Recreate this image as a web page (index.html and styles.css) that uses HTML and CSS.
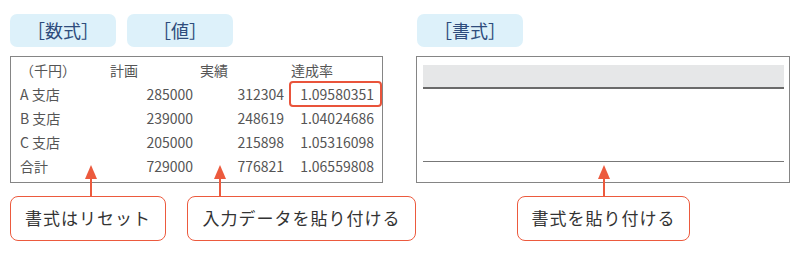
FILE: index.html
```html
<!DOCTYPE html>
<html lang="ja">
<head>
    <meta charset="UTF-8">
    <meta name="viewport" content="width=device-width, initial-scale=1.0">
    <title>貼り付けのオプション</title>
    <link rel="stylesheet" href="styles.css">
</head>
<body>
    <div class="page">
        <div class="column column-left">
            <div class="tags">
                <div class="tag">［数式］</div>
                <div class="tag">［値］</div>
            </div>

            <div class="sheet">
                <div class="grid">
                    <div class="cell label">（千円）</div>
                    <div class="cell head head-plan">計画</div>
                    <div class="cell head head-result">実績</div>
                    <div class="cell rate head">達成率</div>

                    <div class="cell label">A 支店</div>
                    <div class="cell num plan">285000</div>
                    <div class="cell num result">312304</div>
                    <div class="cell num rate marked">1.09580351</div>

                    <div class="cell label">B 支店</div>
                    <div class="cell num plan">239000</div>
                    <div class="cell num result">248619</div>
                    <div class="cell num rate">1.04024686</div>

                    <div class="cell label">C 支店</div>
                    <div class="cell num plan">205000</div>
                    <div class="cell num result">215898</div>
                    <div class="cell num rate">1.05316098</div>

                    <div class="cell label">合計</div>
                    <div class="cell num plan">729000</div>
                    <div class="cell num result">776821</div>
                    <div class="cell num rate">1.06559808</div>
                </div>
            </div>

            <div class="notes">
                <div class="note note-reset">
                    <svg class="arrow" width="12" height="32" viewBox="0 0 12 32"><polygon points="6,0 0,14 12,14"/><rect x="5" y="13" width="2" height="19"/></svg>
                    書式はリセット
                </div>
                <div class="note note-values">
                    <svg class="arrow" width="12" height="32" viewBox="0 0 12 32"><polygon points="6,0 0,14 12,14"/><rect x="5" y="13" width="2" height="19"/></svg>
                    入力データを貼り付ける
                </div>
            </div>
        </div>

        <div class="column column-right">
            <div class="tags">
                <div class="tag">［書式］</div>
            </div>

            <div class="sheet sheet-format">
                <div class="band"></div>
                <div class="rule"></div>
            </div>

            <div class="notes">
                <div class="note note-format">
                    <svg class="arrow" width="12" height="32" viewBox="0 0 12 32"><polygon points="6,0 0,14 12,14"/><rect x="5" y="13" width="2" height="19"/></svg>
                    書式を貼り付ける
                </div>
            </div>
        </div>
    </div>
</body>
</html>
```

FILE: styles.css
```css
* {
    margin: 0;
    padding: 0;
    box-sizing: border-box;
}

body {
    font-family: "Noto Sans CJK JP", "Noto Sans", sans-serif;
    background: #fff;
    color: #333;
}

.page {
    display: flex;
    gap: 33px;
    padding: 14px 10px 0 10px;
}

.column {
    flex-shrink: 0;
}

.column-left {
    width: 373px;
}

.column-right {
    width: 374px;
}

/* tab labels */
.tags {
    display: flex;
    gap: 11px;
    height: 33px;
    margin-bottom: 9px;
}

.column-right .tags {
    padding-left: 1px;
}

.tag {
    width: 106px;
    height: 33px;
    background: #ddf1fa;
    border-radius: 7px;
    color: #2e4c7c;
    font-size: 18px;
    line-height: 33px;
    text-align: center;
}

/* spreadsheet panels */
.sheet {
    height: 127px;
    border: 1px solid #858585;
    padding: 1px 0 4px 0;
}

.grid {
    display: grid;
    grid-template-columns: 95px 88px 95px 93px;
    grid-auto-rows: 24px;
    font-size: 14px;
    color: #555;
}

.cell {
    line-height: 24px;
    white-space: nowrap;
}

.label {
    padding-left: 9px;
}

.head-plan {
    padding-left: 4px;
}

.head-result {
    padding-left: 6px;
}

.num {
    text-align: right;
}

.plan {
    padding-right: 1px;
}

.result {
    padding-right: 5px;
}

.rate {
    border: 2px solid transparent;
    line-height: 20px;
    padding-right: 6px;
}

.rate.head {
    text-align: left;
    padding-left: 0;
}

.rate.marked {
    border-color: #e9543b;
    border-radius: 4px;
    margin: -1px 0;
    line-height: 22px;
}

.sheet-format {
    padding: 8px 5px 0 6px;
}

.band {
    height: 24px;
    background: #e6e7e8;
    border-bottom: 2px solid #6a6a6a;
}

.rule {
    margin-top: 72px;
    height: 0;
    border-top: 1.5px solid #777;
}

/* callouts */
.notes {
    display: flex;
    gap: 21px;
    margin-top: 13px;
}

.note {
    position: relative;
    flex-shrink: 0;
    height: 45px;
    border: 1.5px solid #ec5a3e;
    border-radius: 8px;
    font-size: 17px;
    letter-spacing: 1px;
    line-height: 42px;
    text-align: center;
    color: #333;
    background: #fff;
}

.arrow {
    position: absolute;
    bottom: 100%;
    fill: #ec5a3e;
}

.note-reset {
    width: 156px;
}

.note-reset .arrow {
    left: 74px;
}

.note-values {
    width: 229px;
}

.note-values .arrow {
    left: 26px;
}

.column-right .notes {
    padding-left: 101px;
}

.note-format {
    width: 173px;
}

.note-format .arrow {
    left: 80px;
}
```
